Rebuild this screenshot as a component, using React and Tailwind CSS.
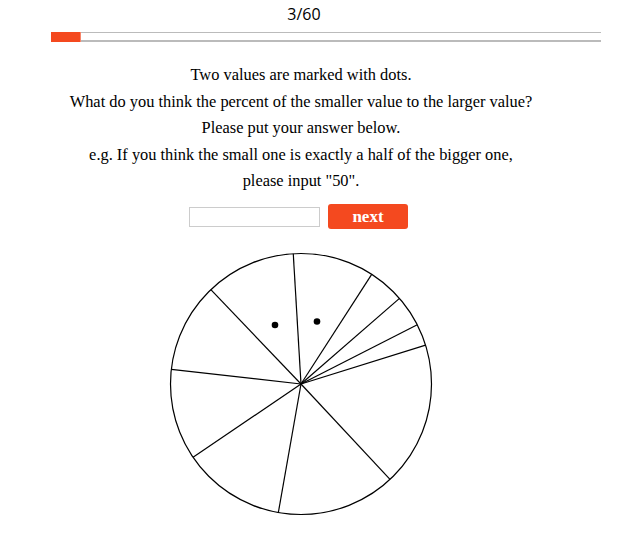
import React from 'react'

// angles (deg) of the slice borders, svg coords, 0 = right, clockwise
const borders = [-93.4, -57.2, -41.0, -27.0, -17.3, 47.0, 100.0, 145.8, 186.4, 226.3]

const PieChart = () => {
  const cx = 132
  const cy = 132
  const r = 130.5
  return (
    <svg width="264" height="264" viewBox="0 0 264 264">
      <circle cx={cx} cy={cy} r={r} fill="white" stroke="black" strokeWidth="1.2" />
      {borders.map(a => {
        const rad = (a * Math.PI) / 180
        return (
          <line
            key={a}
            x1={cx}
            y1={cy}
            x2={cx + r * Math.cos(rad)}
            y2={cy + r * Math.sin(rad)}
            stroke="black"
            strokeWidth="1.2"
          />
        )
      })}
      <circle cx={106} cy={73} r={3.3} fill="black" />
      <circle cx={148} cy={69.5} r={3.3} fill="black" />
    </svg>
  )
}

const App = () => {
  const serif = { fontFamily: '"Liberation Serif", "DejaVu Serif", serif' }
  return (
    <div className="w-[637px] h-[539px] bg-white overflow-hidden text-black">
      <div className="w-[602px]">
        <div
          className="h-[29px] leading-[29px] text-center text-[16px] pl-[6px]"
          style={{ fontFamily: '"Open Sans", "Liberation Sans", sans-serif' }}
        >
          3/60
        </div>
        <div className="mt-[3px] ml-[51px] w-[550px] flex">
          <div className="w-[30px] h-[10px] bg-[#f4491f] border-r border-[#f7856a]" />
          <div className="flex-1 h-[10px] border-t border-b-2 border-[#bbbbbb]" />
        </div>

        <div className="mt-[20px] text-center text-[16.4px] leading-[26.5px]" style={serif}>
          <p>Two values are marked with dots.</p>
          <p>What do you think the percent of the smaller value to the larger value?</p>
          <p>Please put your answer below.</p>
          <p>e.g. If you think the small one is exactly a half of the bigger one,</p>
          <p>please input "50".</p>
        </div>

        <div className="mt-[9.5px] flex items-center justify-center gap-2 pr-[5px]">
          <input
            type="text"
            className="w-[131px] h-[20px] border border-[#cccccc] outline-none"
          />
          <button
            className="w-[80px] h-[25px] rounded-[3px] bg-[#f4491f] text-white font-bold text-[17px] leading-[25px]"
            style={serif}
          >
            next
          </button>
        </div>

        <div className="mt-[22.5px] flex justify-center">
          <PieChart />
        </div>
      </div>
    </div>
  )
}

export default App
